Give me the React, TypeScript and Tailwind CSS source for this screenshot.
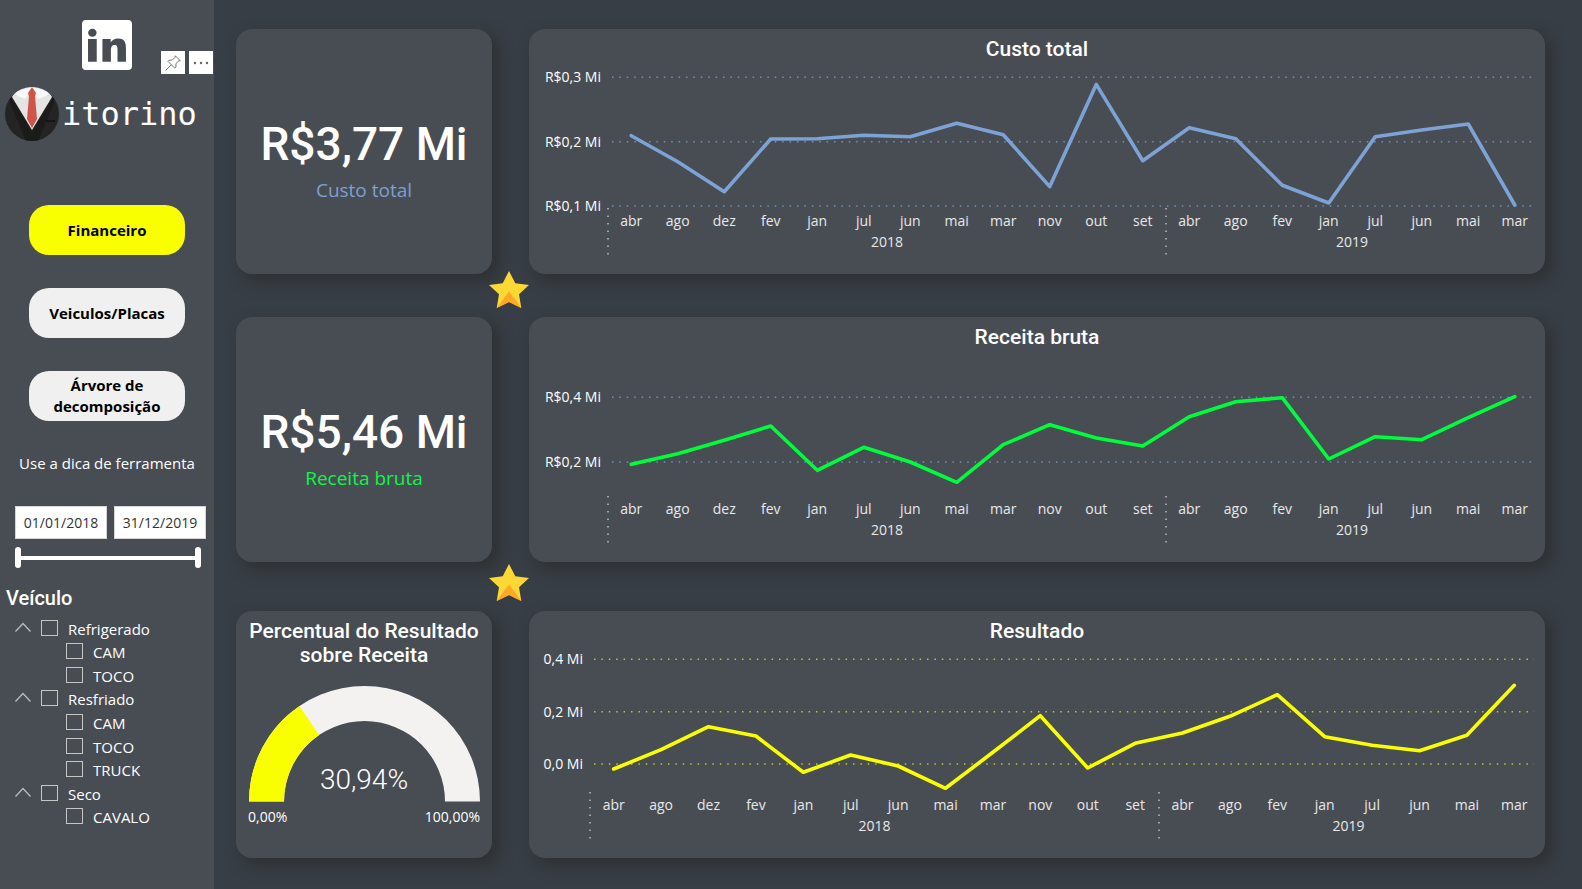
import { useState } from "react";

const MONTHS_2018 = ["abr", "ago", "dez", "fev", "jan", "jul", "jun", "mai", "mar", "nov", "out", "set"];
const MONTHS_2019 = ["abr", "ago", "fev", "jan", "jul", "jun", "mai", "mar"];

type Tick = { label: string; y: number };

type ChartProps = {
  title: string;
  stroke: string;
  grid: string;
  axis: string;
  axisWidth: number;
  height: number;
  ticks: Tick[];
  points: number[];
};

const CARD = "rounded-2xl bg-[#484d54] shadow-[6px_6px_14px_2px_#2f3235]";
const TITLE = "text-center font-['Roboto',sans-serif] text-[21px] leading-6 font-medium text-white";

function Year({ year, months }: { year: string; months: string[] }) {
  return (
    <div className="relative pt-1" style={{ flexGrow: months.length, flexBasis: 0 }}>
      <svg className="absolute top-0 left-0 h-12 w-1 overflow-visible" aria-hidden="true">
        <line x1="0" y1="0" x2="0" y2="48" stroke="#c4c6c8" strokeWidth="1.4" strokeDasharray="1.4 6.1" />
      </svg>
      <div className="flex leading-[18px]">
        {months.map((m) => (
          <span key={m} className="flex-1 basis-0 text-center">
            {m}
          </span>
        ))}
      </div>
      <div className="pt-[3px] text-center leading-[18px]">{year}</div>
    </div>
  );
}

function LineChart({ title, stroke, grid, axis, axisWidth, height, ticks, points }: ChartProps) {
  const line = points.map((y, i) => `${i + 0.5},${y}`).join(" ");
  const pct = (y: number) => `${(y / height) * 100}%`;
  return (
    <section className={`flex min-w-0 flex-1 flex-col pt-2 ${CARD}`}>
      <h2 className={TITLE}>{title}</h2>
      <div className="flex flex-1 pr-[7px]">
        <div className={`relative shrink-0 ${axis}`}>
          <svg className="absolute inset-0 h-full w-full overflow-visible">
            {ticks.map((t) => (
              <text key={t.label} x={axisWidth - 7} y={pct(t.y)} dy="5" textAnchor="end" fill="#ffffff" fontSize="14">
                {t.label}
              </text>
            ))}
          </svg>
        </div>
        <div className="relative min-w-0 flex-1">
          <div className="absolute inset-x-1 inset-y-0">
            <svg className="h-full w-full overflow-visible" aria-hidden="true">
              {ticks.map((t) => (
                <line key={t.label} x1="0" x2="100%" y1={pct(t.y)} y2={pct(t.y)} stroke={grid} strokeWidth="1.4" strokeDasharray="1.5 5.9" />
              ))}
            </svg>
          </div>
          <svg
            className="absolute inset-0 h-full w-full overflow-visible"
            viewBox={`0 0 20 ${height}`}
            preserveAspectRatio="none"
            role="img"
            aria-label={title}
          >
            <polyline
              points={line}
              fill="none"
              stroke={stroke}
              strokeWidth="3.6"
              strokeLinecap="round"
              strokeLinejoin="round"
              vectorEffect="non-scaling-stroke"
            />
          </svg>
        </div>
      </div>
      <div className="flex h-[66px] pr-[7px] text-sm text-[#e8e8e8]">
        <div className={`${axis} shrink-0`} />
        <div className="flex flex-1">
          <Year year="2018" months={MONTHS_2018} />
          <Year year="2019" months={MONTHS_2019} />
        </div>
      </div>
    </section>
  );
}

function Kpi({ value, label, tone }: { value: string; label: string; tone: string }) {
  return (
    <section className={`flex w-64 shrink-0 flex-col items-center justify-center pt-4 ${CARD}`}>
      <p className="font-['Roboto',sans-serif] text-[46px] leading-[60px] font-medium whitespace-nowrap text-white">{value}</p>
      <p className={`text-[19px] leading-8 ${tone}`}>{label}</p>
    </section>
  );
}

function Gauge() {
  const ratio = 0.3094;
  const angle = Math.PI * (1 - ratio);
  const R = 115.5;
  const r = 80.5;
  const at = (rad: number) => `${R + rad * Math.cos(angle)} ${R - rad * Math.sin(angle)}`;
  return (
    <section className={`flex w-64 shrink-0 flex-col px-3 pt-2 ${CARD}`}>
      <h2 className={TITLE}>
        Percentual do Resultado
        <br />
        sobre Receita
      </h2>
      <div className="relative mt-[19px]">
        <svg className="mx-auto block w-[231px]" viewBox="0 0 231 115.5" role="img" aria-label="Percentual do Resultado sobre Receita">
          <path d={`M0 ${R}A${R} ${R} 0 0 1 231 ${R}H196A${r} ${r} 0 0 0 35 ${R}Z`} fill="#f3f2f1" />
          <path d={`M0 ${R}A${R} ${R} 0 0 1 ${at(R)}L${at(r)}A${r} ${r} 0 0 0 35 ${R}Z`} fill="#faff00" />
        </svg>
        <p className="absolute inset-x-0 bottom-1 text-center font-['Roboto',sans-serif] text-[28px] leading-9 font-light text-white">30,94%</p>
      </div>
      <div className="flex justify-between pt-[5px] text-sm text-white">
        <span>0,00%</span>
        <span>100,00%</span>
      </div>
    </section>
  );
}

function Star({ place }: { place: string }) {
  return (
    <svg className={`absolute left-[253px] z-10 h-[37px] w-10 ${place}`} viewBox="0 0 40 37" aria-hidden="true">
      <path d="M20 0L26.3 12.2L40 14L30 23.2L32.3 37L20 31L7.7 37L10 23.2L0 14L13.7 12.2Z" fill="#fdd835" />
      <path d="M20 20.5L32.3 37L20 31L7.7 37Z" fill="#ffa726" />
    </svg>
  );
}

function Wordmark() {
  return (
    <div className="mt-[17px] flex h-[54px] items-center gap-[3px] pl-[5px]">
      <svg className="h-[54px] w-[54px] shrink-0" viewBox="0 0 54 54" aria-hidden="true">
        <defs>
          <clipPath id="badge">
            <circle cx="27" cy="27" r="27" />
          </clipPath>
        </defs>
        <g clipPath="url(#badge)">
          <rect width="54" height="54" fill="#242424" />
          <path d="M6 10L27 45L48 10L50 13L33 54H21L4 13Z" fill="#1b1b1b" />
          <path d="M7 10L27 43L47 10L40 -2H14Z" fill="#e4e4e4" />
          <path d="M27 0L9 5L13 9L20 12L26 3L33 12L41 9L45 5Z" fill="#f8f8f8" />
          <path d="M27 0L23 6L24 9L22 32L27 41L32 32L30 9L31 6Z" fill="#cf5449" />
          <path d="M41 34H50" stroke="#111111" strokeWidth="1.5" />
        </g>
      </svg>
      <span className="font-['DejaVu_Sans_Mono',monospace] text-[32px] leading-none text-white">itorino</span>
    </div>
  );
}

function LinkedIn() {
  return (
    <a href="#linkedin" aria-label="LinkedIn" className="block h-[50px] w-[50px]">
      <svg viewBox="0 32 448 448" fill="#ffffff" aria-hidden="true">
        <path d="M416 32H31.9C14.3 32 0 46.5 0 64.3v383.4C0 465.5 14.3 480 31.9 480H416c17.6 0 32-14.5 32-32.3V64.3c0-17.8-14.4-32.3-32-32.3zM132 406H54V202h78V406zM93 183c-21 0-38-16-38-36.500S72 110 93 110s38 16 38 36.500S114 183 93 183zM394 406h-76V298c0-25-3-43-26-43-25 0-33 20-33 47V406h-76V202h74v29h1c9-17 32-34 65-34 67 0 71 44 71 102V406z" />
      </svg>
    </a>
  );
}

function VisualTools() {
  return (
    <div className="absolute top-[51px] right-px flex gap-1">
      <button type="button" aria-label="Fixar" className="flex h-[23px] w-6 items-center justify-center bg-white">
        <svg className="h-4 w-4" viewBox="0 0 16 16" fill="none" stroke="#666666" strokeWidth="0.9" strokeLinejoin="round" aria-hidden="true">
          <path d="M10.3 0.8L15.2 5.7L13.6 6L10.9 8.7L11 12L9.7 13.1L3 6.4L4.1 5.2L7.3 5.1L10 2.4Z" />
          <path d="M6.3 9.8L0.5 15.5" />
        </svg>
      </button>
      <button type="button" aria-label="Mais opções" className="flex h-[23px] w-6 items-center justify-center bg-white">
        <svg className="h-1 w-4" viewBox="0 0 16 4" fill="#666666" aria-hidden="true">
          <circle cx="2" cy="2" r="1.2" />
          <circle cx="8" cy="2" r="1.2" />
          <circle cx="14" cy="2" r="1.2" />
        </svg>
      </button>
    </div>
  );
}

const NAV = [
  { label: "Financeiro", fill: "bg-[#faff00]" },
  { label: "Veiculos/Placas", fill: "bg-[#f0f0f0]" },
  { label: "Árvore de decomposição", fill: "bg-[#f0f0f0]" },
];

const VEHICLES = [
  { label: "Refrigerado", parent: true },
  { label: "CAM", parent: false },
  { label: "TOCO", parent: false },
  { label: "Resfriado", parent: true },
  { label: "CAM", parent: false },
  { label: "TOCO", parent: false },
  { label: "TRUCK", parent: false },
  { label: "Seco", parent: true },
  { label: "CAVALO", parent: false },
];

const DATE = "h-[33px] w-[92px] border border-[#d6d6d6] bg-white text-center text-sm text-[#333333] outline-none";
const RANGE =
  "pointer-events-none absolute inset-0 h-full w-full appearance-none bg-transparent [&::-webkit-slider-thumb]:pointer-events-auto [&::-webkit-slider-thumb]:h-[21px] [&::-webkit-slider-thumb]:w-1.5 [&::-webkit-slider-thumb]:appearance-none [&::-webkit-slider-thumb]:rounded-sm [&::-webkit-slider-thumb]:bg-white";

function Sidebar() {
  const [from, setFrom] = useState("01/01/2018");
  const [to, setTo] = useState("31/12/2019");
  return (
    <aside className="relative w-[214px] shrink-0 bg-[#484d54] pt-5">
      <div className="flex justify-center">
        <LinkedIn />
      </div>
      <VisualTools />
      <Wordmark />
      <nav className="mt-16 flex flex-col items-center gap-[33px]">
        {NAV.map((n) => (
          <button
            key={n.label}
            type="button"
            className={`h-[50px] w-[156px] rounded-[20px] px-4 text-[15px] leading-[21px] font-bold text-black ${n.fill}`}
          >
            {n.label}
          </button>
        ))}
      </nav>
      <p className="mt-8 text-center text-[15px] leading-5 text-white">Use a dica de ferramenta</p>
      <div className="mt-[33px] flex gap-[7px] pl-[15px]">
        <input className={DATE} aria-label="Data inicial" value={from} onChange={(e) => setFrom(e.target.value)} />
        <input className={DATE} aria-label="Data final" value={to} onChange={(e) => setTo(e.target.value)} />
      </div>
      <div className="relative mt-2 mr-[13px] ml-[15px] flex h-[21px] items-center">
        <div className="h-1 w-full bg-white" />
        <input type="range" aria-label="Início do período" min={0} max={100} defaultValue={0} className={RANGE} />
        <input type="range" aria-label="Fim do período" min={0} max={100} defaultValue={100} className={RANGE} />
      </div>
      <h2 className="mt-[18px] pl-1.5 font-['Roboto',sans-serif] text-xl leading-6 font-medium text-white">Veículo</h2>
      <ul className="mt-1.5 grid h-[212px] auto-rows-fr">
        {VEHICLES.map((v, i) => (
          <li key={i} className={`flex items-center ${v.parent ? "pl-[15px]" : "pl-[66px]"}`}>
            {v.parent && (
              <button type="button" aria-label={`Recolher ${v.label}`} className="mr-2.5 h-4 w-4">
                <svg viewBox="0 0 16 16" fill="none" stroke="#b9bbbd" strokeWidth="1.3" aria-hidden="true">
                  <path d="M0.5 11.5L8 3.5L15.5 11.5" />
                </svg>
              </button>
            )}
            <input
              id={`veiculo-${i}`}
              type="checkbox"
              className="h-4 w-[17px] shrink-0 appearance-none border border-[#c6c6c6] checked:bg-[#c6c6c6]"
            />
            <label htmlFor={`veiculo-${i}`} className="pt-0.5 pl-2.5 text-[15px] leading-5 text-white">
              {v.label}
            </label>
          </li>
        ))}
      </ul>
    </aside>
  );
}

export default function App() {
  return (
    <div className="flex min-h-screen bg-[#383e45] font-['Open_Sans','Noto_Sans',sans-serif]">
      <Sidebar />
      <main className="min-w-0 flex-1 pt-[29px] pr-[37px] pb-[31px] pl-[22px]">
        <div className="relative flex min-h-[245px] gap-[37px]">
          <Kpi value="R$3,77 Mi" label="Custo total" tone="text-[#7e9fd0]" />
          <LineChart
            title="Custo total"
            stroke="#7da2d6"
            grid="#7190b8"
            axis="w-[79px]"
            axisWidth={79}
            height={147}
            ticks={[
              { label: "R$0,3 Mi", y: 16.3 },
              { label: "R$0,2 Mi", y: 80.7 },
              { label: "R$0,1 Mi", y: 145 },
            ]}
            points={[74.7, 100.8, 130.7, 78, 77.7, 74.3, 75.7, 62.3, 73.7, 125.6, 23.4, 99.7, 66.7, 77.7, 124.3, 142, 75.7, 69, 63, 144]}
          />
          <Star place="top-[242px]" />
        </div>
        <div className="relative mt-[43px] flex min-h-[245px] gap-[37px]">
          <Kpi value="R$5,46 Mi" label="Receita bruta" tone="text-[#0cf647]" />
          <LineChart
            title="Receita bruta"
            stroke="#00fd3c"
            grid="#7190b8"
            axis="w-[79px]"
            axisWidth={79}
            height={147}
            ticks={[
              { label: "R$0,4 Mi", y: 48.3 },
              { label: "R$0,2 Mi", y: 113 },
            ]}
            points={[115.3, 104.7, 91.3, 77, 121.3, 98.3, 113, 133.3, 95.7, 75.7, 89, 97, 67.7, 52.7, 48.7, 110, 87.7, 90.7, 68.7, 47.7]}
          />
          <Star place="top-[247px]" />
        </div>
        <div className="mt-[49px] flex min-h-[247px] gap-[37px]">
          <Gauge />
          <LineChart
            title="Resultado"
            stroke="#faff00"
            grid="#bfc32a"
            axis="w-[61px]"
            axisWidth={61}
            height={149}
            ticks={[
              { label: "0,4 Mi", y: 16.3 },
              { label: "0,2 Mi", y: 68.7 },
              { label: "0,0 Mi", y: 121 },
            ]}
            points={[126, 106.7, 83.7, 93, 129.3, 112, 123, 145.3, 109.3, 72.7, 125, 100.3, 90, 73.3, 51.7, 93.7, 102.3, 107.7, 92.3, 42.3]}
          />
        </div>
      </main>
    </div>
  );
}
